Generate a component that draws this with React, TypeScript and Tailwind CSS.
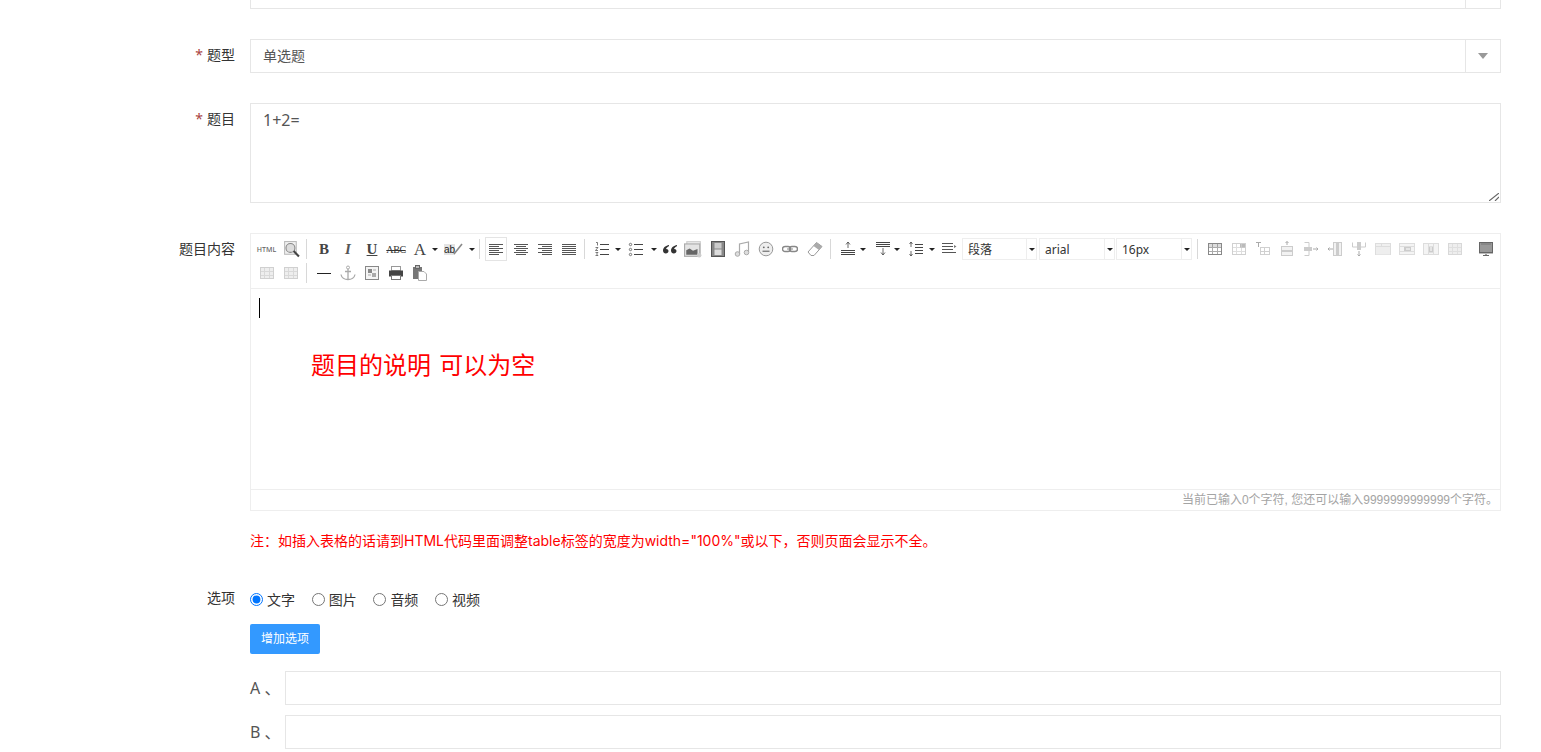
import type { ReactNode } from "react";
import clsx from "clsx";

const font = "font-['Noto_Sans','Noto_Sans_CJK_SC',sans-serif]";

function Ico({ children, className }: { children: ReactNode; className?: string }) {
  return (
    <svg viewBox="0 0 16 16" className={clsx("h-4 w-4", className)} fill="none" stroke="currentColor" strokeWidth="1">
      {children}
    </svg>
  );
}

function Btn({ children, className }: { children: ReactNode; className?: string }) {
  return <div className={clsx("flex h-6 w-6 items-center justify-center text-[#555]", className)}>{children}</div>;
}

function Caret() {
  return <span className="ml-auto mr-px h-0 w-0 border-x-[3px] border-t-[3px] border-x-transparent border-t-[#222]" />;
}

function Split({ children, className }: { children: ReactNode; className?: string }) {
  return (
    <div className={clsx("flex h-6 items-center text-[#444]", className)}>
      <span className="flex w-6 justify-center">{children}</span>
      <Caret />
    </div>
  );
}

function Sep() {
  return <div className="ml-[3px] mr-[5px] mt-[2px] h-5 w-px bg-[#d8d8d8]" />;
}

function ToolSelect({ label, className }: { label: string; className?: string }) {
  return (
    <div className={clsx("mt-px flex h-[22px] items-center border border-[#eee] text-xs text-[#333]", className)}>
      <span className="flex-1 pl-[5px] pt-[2px]">{label}</span>
      <span className="flex h-full w-[10px] items-center justify-center border-l border-[#eee]">
        <span className="h-0 w-0 border-x-[3px] border-t-[3px] border-x-transparent border-t-[#222]" />
      </span>
    </div>
  );
}

const lines = (ys: number[], x1: number, x2: number) =>
  ys.map((y) => <path key={y} d={`M${x1} ${y}.5H${x2}`} shapeRendering="crispEdges" />);

function GridIcon({ className, children }: { className?: string; children?: ReactNode }) {
  return (
    <Ico className={className}>
      {children}
      <rect x="1.5" y="2.5" width="13" height="11" shapeRendering="crispEdges" />
      <path d="M1 6.5H15M1 10.5H15M5.5 3V13M10.5 3V13" shapeRendering="crispEdges" opacity="0.7" />
    </Ico>
  );
}

function Toolbar() {
  return (
    <div className="flex flex-wrap border-b border-[#eee] pb-[3px] pl-[3px] pt-[3px]">
      <Btn className="w-[25px]">
        <span className="text-[7px] font-medium leading-none text-[#666]">HTML</span>
      </Btn>
      <Btn>
        <Ico className="h-[17px] w-[17px]">
          <rect x="1.5" y="0.5" width="11" height="12" stroke="#bbb" fill="#f0f0f0" />
          <circle cx="7" cy="6.5" r="4.2" stroke="#888" fill="#ddd" />
          <path d="M10 9.5L15 14.5" stroke="#444" strokeWidth="2" />
        </Ico>
      </Btn>
      <Sep />
      <Btn><span className="font-['Liberation_Serif',serif] text-[15px] font-bold text-[#444]">B</span></Btn>
      <Btn><span className="font-['Liberation_Serif',serif] text-[15px] font-bold italic text-[#555]">I</span></Btn>
      <Btn><span className="font-['Liberation_Serif',serif] text-[15px] font-bold leading-[14px] text-[#444] underline">U</span></Btn>
      <Btn><span className="font-['Liberation_Serif',serif] text-[10px] tracking-[-0.4px] text-[#333] line-through">ABC</span></Btn>
      <Split className="w-[31px]"><span className="font-['Liberation_Serif',serif] text-[17px] leading-none text-[#444]">A</span></Split>
      <Split className="w-[37px]">
        <span className="relative -ml-[3px] bg-[#e4e4e4] font-['Liberation_Sans',sans-serif] text-[10px] leading-[11px] text-[#222]">
          ab
          <svg viewBox="0 0 10 12" className="absolute -right-[8px] -top-px h-3 w-[10px]" fill="none" stroke="#888" strokeWidth="1.6">
            <path d="M1 11L9 1" />
          </svg>
        </span>
      </Split>
      <Sep />
      <Btn className="mr-[2px] w-[22px] border border-[#e4e4e4]">
        <Ico>{lines([3, 7, 11], 1, 15)}{lines([5, 9, 13], 1, 11)}</Ico>
      </Btn>
      <Btn><Ico>{lines([3, 7, 11], 1, 15)}{lines([5, 9, 13], 3, 13)}</Ico></Btn>
      <Btn><Ico>{lines([3, 7, 11], 1, 15)}{lines([5, 9, 13], 5, 15)}</Ico></Btn>
      <Btn><Ico>{lines([3, 5, 7, 9, 11, 13], 1, 15)}</Ico></Btn>
      <Sep />
      <Split className="w-[32px]">
        <Ico>
          {lines([3, 8, 13], 6, 15)}
          <path d="M2 1.5H3.5V4.5M1.5 6.5H4L1.5 9.5H4M1.5 11.5H4L2.5 13L4 14.5H1.5" strokeWidth="0.7" />
        </Ico>
      </Split>
      <Split className="w-[36px] pl-[2px]">
        <Ico>
          {lines([3, 8, 13], 6, 15)}
          <circle cx="2.5" cy="3.5" r="1.2" strokeWidth="0.7" />
          <circle cx="2.5" cy="8.5" r="1.2" strokeWidth="0.7" />
          <circle cx="2.5" cy="13.5" r="1.2" strokeWidth="0.7" />
        </Ico>
      </Split>
      <Btn>
        <Ico>
          <path d="M7 4C4 4.5 1 6.5 1 9.5C1 11.5 2.3 12.5 3.8 12.5C5.3 12.5 6.5 11.4 6.5 10C6.5 8.6 5.4 7.8 4 7.9C4.5 6.5 6 5.5 7 5.2ZM15 4C12 4.5 9 6.5 9 9.5C9 11.5 10.3 12.5 11.8 12.5C13.3 12.5 14.5 11.4 14.5 10C14.5 8.6 13.4 7.8 12 7.9C12.5 6.5 14 5.5 15 5.2Z" fill="#333" stroke="none" />
        </Ico>
      </Btn>
      <Btn className="pr-[2px]">
        <Ico className="h-[18px] w-[18px]">
          <rect x="2.5" y="1.5" width="12" height="11" stroke="#ccc" fill="#f0f0f0" />
          <rect x="0.5" y="3.5" width="13.5" height="11" stroke="#aaa" fill="#e4e4e4" />
          <path d="M2 13V9L5 7.5L8 9.5L12 8V13Z" fill="#666" stroke="none" />
          <circle cx="13.5" cy="13.5" r="2" fill="#ccc" stroke="none" />
        </Ico>
      </Btn>
      <Btn>
        <Ico>
          <rect x="1.5" y="0.5" width="13" height="15" fill="#888" stroke="#555" />
          <rect x="4.5" y="2" width="7" height="5.5" fill="#ccc" stroke="none" />
          <rect x="4.5" y="8.5" width="7" height="5.5" fill="#ddd" stroke="none" />
        </Ico>
      </Btn>
      <Btn className="text-[#aaa]">
        <Ico>
          <path d="M5.5 13V3L14.5 1V11" strokeWidth="1.2" />
          <circle cx="3.5" cy="13" r="2.3" fill="#ddd" />
          <circle cx="12.5" cy="11.5" r="2.3" fill="#ddd" />
        </Ico>
      </Btn>
      <Btn className="text-[#999]">
        <Ico>
          <circle cx="8" cy="8" r="6.8" fill="#eee" />
          <circle cx="5.8" cy="6.3" r="0.9" fill="#666" stroke="none" />
          <circle cx="10.2" cy="6.3" r="0.9" fill="#666" stroke="none" />
          <path d="M4.5 10.2H11.5" stroke="#555" />
        </Ico>
      </Btn>
      <Btn className="text-[#888]">
        <Ico>
          <rect x="0.5" y="5.5" width="8" height="5" rx="2.5" strokeWidth="1.4" />
          <rect x="7.5" y="5.5" width="8" height="5" rx="2.5" strokeWidth="1.4" />
          <path d="M5 8H11" strokeWidth="1" />
        </Ico>
      </Btn>
      <Btn className="w-[25px] text-[#999]">
        <Ico>
          <path d="M1 11L9.5 1.5L15 5.5L7 14.5H4Z" fill="#fff" />
          <path d="M9.5 1.5L15 5.5L12 9L6.5 5Z" fill="#aaa" stroke="none" />
        </Ico>
      </Btn>
      <Sep />
      <Split className="w-[31px]">
        <Ico>
          {lines([9, 11, 13], 1, 15)}
          <path d="M8 1V7M6 3.5L8 1L10 3.5" strokeWidth="0.8" />
        </Ico>
      </Split>
      <Split className="w-[34px] pl-[4px]">
        <Ico>
          {lines([1, 3, 5], 1, 15)}
          <path d="M8 7V14M6 11.5L8 14L10 11.5" strokeWidth="0.8" />
        </Ico>
      </Split>
      <Split className="w-[35px] pl-[3px]">
        <Ico>
          {lines([3, 6, 9, 12], 7, 15)}
          <path d="M3 1V6M1.5 3L3 1L4.5 3M3 10V15M1.5 13L3 15L4.5 13" strokeWidth="0.8" />
        </Ico>
      </Split>
      <Btn className="w-[26px]">
        <Ico>
          {lines([2, 5, 8], 1, 12)}
          {lines([11], 1, 15)}
          <path d="M13 4L15.5 5.5L13 7Z" fill="#777" stroke="none" />
        </Ico>
      </Btn>
      <ToolSelect label="段落" className="mr-[2px] w-[75px]" />
      <ToolSelect label="arial" className="mr-px w-[76px]" />
      <ToolSelect label="16px" className="w-[76px]" />
      <div className="ml-[5px] mr-[5px] mt-[2px] h-5 w-px bg-[#d8d8d8]" />
      <Btn className="text-[#888]"><GridIcon><rect x="2" y="3" width="12" height="3" fill="#ddd" stroke="none" /></GridIcon></Btn>
      <Btn className="text-[#d0d0d0]"><GridIcon><rect x="9" y="2" width="5" height="5" fill="#bbb" stroke="none" /></GridIcon></Btn>
      <Btn className="text-[#d0d0d0]">
        <Ico>
          <rect x="5.5" y="6.5" width="9" height="7" shapeRendering="crispEdges" />
          <path d="M5 10.5H15M9.5 7V13" />
          <path d="M1 1.5H6M3.5 1.5V6" stroke="#aaa" />
        </Ico>
      </Btn>
      <Btn className="text-[#ccc]">
        <Ico>
          <rect x="2.5" y="5.5" width="11" height="9" fill="#f2f2f2" shapeRendering="crispEdges" />
          <rect x="2" y="9" width="12" height="2" fill="#ccc" stroke="none" />
          <path d="M8 0.5V4M6.5 2L8 0.5L9.5 2" stroke="#aaa" />
        </Ico>
      </Btn>
      <Btn className="text-[#ccc]">
        <Ico>
          <path d="M1.5 1.5H6V14.5H1.5" />
          <rect x="1" y="6" width="8" height="4" fill="#ccc" stroke="none" />
          <path d="M10 8H15M13.5 6.5L15 8L13.5 9.5" stroke="#aaa" />
        </Ico>
      </Btn>
      <Btn className="text-[#ccc]">
        <Ico>
          <rect x="6.5" y="1.5" width="8" height="13" fill="#f2f2f2" />
          <rect x="9" y="2" width="3" height="12" fill="#ccc" stroke="none" />
          <path d="M1 8H6M2.5 6.5L1 8L2.5 9.5" stroke="#aaa" />
        </Ico>
      </Btn>
      <Btn className="text-[#ccc]">
        <Ico>
          <path d="M1.5 1.5V6H14.5V1.5" />
          <rect x="6" y="1" width="4" height="8" fill="#ccc" stroke="none" />
          <path d="M8 10V15M6.5 13.5L8 15L9.5 13.5" stroke="#aaa" />
        </Ico>
      </Btn>
      <Btn className="text-[#ddd]">
        <Ico>
          <rect x="0.5" y="2.5" width="15" height="11" fill="#f0f0f0" />
          <rect x="1" y="5.5" width="14" height="8" fill="#eee" stroke="none" />
          <path d="M6.5 2V5.5M1 5.5H15" />
        </Ico>
      </Btn>
      <Btn className="text-[#ddd]">
        <Ico>
          <rect x="0.5" y="2.5" width="15" height="11" fill="#f4f4f4" />
          <rect x="5" y="5.5" width="7" height="5" fill="#ccc" stroke="none" />
          <path d="M1 5.5H15M1 10.5H15" />
          <path d="M7 8H11" stroke="#fff" />
        </Ico>
      </Btn>
      <Btn className="text-[#ddd]">
        <Ico>
          <rect x="0.5" y="2.5" width="15" height="11" fill="#f4f4f4" />
          <rect x="5" y="5.5" width="6" height="6" fill="#ccc" stroke="none" />
          <path d="M5.5 3V13M10.5 3V13" />
          <path d="M8 6V10" stroke="#fff" />
        </Ico>
      </Btn>
      <Btn className="text-[#d8d8d8]"><GridIcon><rect x="2" y="3" width="12" height="10" fill="#eee" stroke="none" /></GridIcon></Btn>
      <Btn className="ml-[7px] text-[#666]">
        <Ico>
          <rect x="1.5" y="1.5" width="13" height="10" fill="#999" stroke="#666" />
          <path d="M3 3H13" stroke="#777" />
          <path d="M5 14.5H11M8 12V14" stroke="#666" strokeWidth="1.2" />
          <path d="M1 12.5H15" stroke="#bbb" />
        </Ico>
      </Btn>

      <Btn className="w-[25px] text-[#d0d0d0]"><GridIcon><rect x="2" y="3" width="12" height="10" fill="#eee" stroke="none" /></GridIcon></Btn>
      <Btn className="text-[#d0d0d0]"><GridIcon><rect x="2" y="3" width="12" height="10" fill="#eee" stroke="none" /></GridIcon></Btn>
      <Sep />
      <Btn><Ico><path d="M1 8.5H15" stroke="#222" shapeRendering="crispEdges" /></Ico></Btn>
      <Btn className="text-[#aaa]">
        <Ico>
          <circle cx="8" cy="2.5" r="1.5" />
          <path d="M8 4V14M5 6.5H11M1 9.5C1.5 12.5 4.5 14.5 8 14.5C11.5 14.5 14.5 12.5 15 9.5" strokeWidth="1.3" />
        </Ico>
      </Btn>
      <Btn className="text-[#888]">
        <Ico>
          <rect x="1.5" y="1.5" width="13" height="13" fill="#f4f4f4" shapeRendering="crispEdges" />
          <rect x="4" y="4" width="4" height="4" fill="#888" stroke="none" />
          <rect x="8" y="8" width="4" height="4" fill="#aaa" stroke="none" />
          <path d="M9 5H12M4 10H7" stroke="#aaa" />
        </Ico>
      </Btn>
      <Btn>
        <Ico>
          <rect x="3.5" y="1.5" width="9" height="4" fill="#fff" stroke="#999" />
          <rect x="1" y="5.5" width="14" height="6" fill="#444" stroke="none" />
          <rect x="3.5" y="10.5" width="9" height="4" fill="#fff" stroke="#777" />
        </Ico>
      </Btn>
      <Btn>
        <Ico>
          <path d="M1 2H10V14H1Z" fill="#777" stroke="none" />
          <rect x="3.5" y="0.5" width="4" height="3" fill="#bbb" stroke="#666" />
          <path d="M6.5 6.5H12L14.5 9V15.5H6.5Z" fill="#fff" stroke="#aaa" />
        </Ico>
      </Btn>
    </div>
  );
}

function Row({
  children,
  text,
  required,
  className,
  labelClass = "pt-[6px]",
}: {
  children: ReactNode;
  text?: string;
  required?: boolean;
  className?: string;
  labelClass?: string;
}) {
  return (
    <div className={clsx("flex", className)}>
      <div className={clsx("w-[235px] shrink-0 text-right text-sm leading-5 text-[#333]", labelClass)}>
        {required && <span className="mr-[4px] text-[#a94442]">*</span>}
        {text}
      </div>
      <div className="ml-[15px] w-[1251px]">{children}</div>
    </div>
  );
}

function SelectBox({ value }: { value?: string }) {
  return (
    <div className="flex h-[34px] items-center border border-[#e6e6e6] bg-white text-sm text-[#555]">
      <span className="flex-1 pl-3">{value}</span>
      <span className="flex h-full w-[35px] items-center justify-center border-l border-[#e6e6e6]">
        <span className="h-0 w-0 border-x-[5px] border-t-[6px] border-x-transparent border-t-[#999]" />
      </span>
    </div>
  );
}

function Radio({ label, checked }: { label: string; checked?: boolean }) {
  return (
    <label className="mr-[16.7px] flex items-center">
      <input type="radio" name="optionType" defaultChecked={checked} className="m-0 -mt-px h-[13px] w-[13px]" />
      <span className="ml-1 text-sm text-[#333]">{label}</span>
    </label>
  );
}

function OptionInput({ letter }: { letter: string }) {
  return (
    <div className="flex h-[34px] items-center">
      <span className="w-[35px] shrink-0 text-base text-[#555]">{letter} 、</span>
      <input className="h-full flex-1 border border-[#e6e6e6] bg-white px-3 outline-none" />
    </div>
  );
}

export default function App() {
  return (
    <div className={clsx("h-[752px] overflow-hidden bg-white", font)}>
      <div className="-mt-[25px] flex flex-col">
        <Row className="mb-[30px]"><SelectBox /></Row>
        <Row className="mb-[30px]" text="题型" required>
          <SelectBox value="单选题" />
        </Row>
        <Row className="mb-[30px]" text="题目" required>
          <div className="relative">
            <textarea
              defaultValue="1+2="
              className="block h-[100px] w-full resize-none border border-[#e6e6e6] bg-white px-3 py-[6px] text-base leading-5 text-[#555] outline-none"
            />
            <svg viewBox="0 0 10 8" className="absolute bottom-[2px] right-[2px] h-2 w-[10px]" fill="none" stroke="#666" strokeWidth="1.1">
              <path d="M0 8L10 0M6 8L10 4" />
            </svg>
          </div>
        </Row>
        <Row text="题目内容">
          <div className="border border-[#eee]">
            <Toolbar />
            <div className="h-[201px] border-b border-[#eee]">
              <div className="ml-2 h-[9px]" />
              <div className="ml-2 h-5 w-px bg-black" />
              <p className="ml-[60px] mt-[31px] text-2xl leading-8 text-[#f00] [word-spacing:2px]">题目的说明 可以为空</p>
            </div>
            <div className="flex h-5 items-center justify-end pr-[2px] font-['Liberation_Sans','Noto_Sans_CJK_SC',sans-serif] text-xs text-[#a4a4a4]">
              当前已输入0个字符, 您还可以输入9999999999999个字符。
            </div>
          </div>
        </Row>
        <Row className="mt-5">
          <p className="font-['Inter','Noto_Sans_CJK_SC',sans-serif] text-sm leading-5 text-[#f00]">
            注：如插入表格的话请到HTML代码里面调整table标签的宽度为width="100%"或以下，否则页面会显示不全。
          </p>
        </Row>
        <Row className="mt-[37px]" text="选项" labelClass="">
          <div className="flex h-6 items-center">
            <Radio label="文字" checked />
            <Radio label="图片" />
            <Radio label="音频" />
            <Radio label="视频" />
          </div>
          <button className="mt-3 block h-[30px] w-[70px] rounded-[2px] bg-[#39f] text-xs text-white">增加选项</button>
          <div className="mt-[17px] flex flex-col gap-[10px]">
            <OptionInput letter="A" />
            <OptionInput letter="B" />
          </div>
        </Row>
      </div>
    </div>
  );
}
